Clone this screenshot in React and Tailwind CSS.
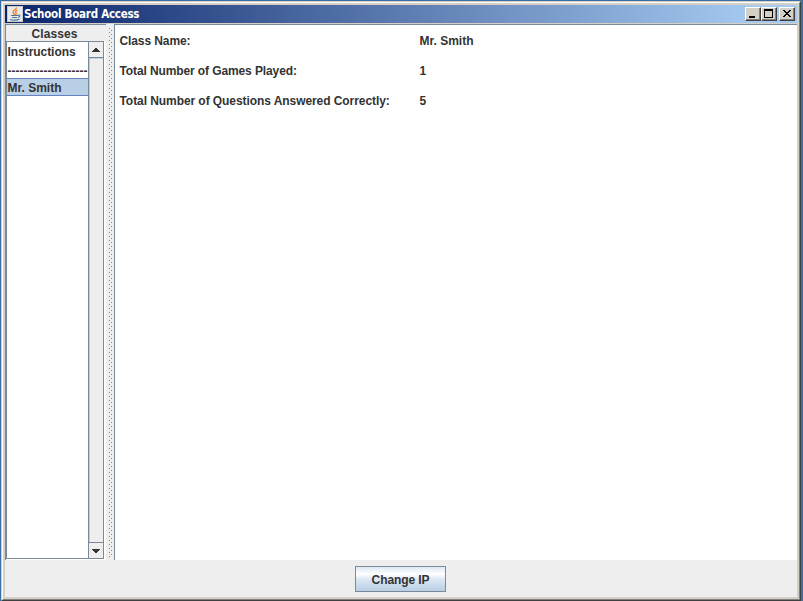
const line = "border-[#7a8a99]";

function JavaIcon() {
  return (
    <svg className="h-4 w-4 shrink-0" viewBox="0 0 16 16" fill="none">
      <rect width="16" height="16" fill="#c8ccd0" />
      <rect x="1" y="1" width="14" height="14" fill="#e9e9e7" />
      <path d="M9.500 1.500C9.500 3.500 6 4 6 6C6 7.300 7.500 7.600 7.500 9M10.500 4C8.500 5 8 6 9 7C9.500 7.700 9 8.200 8.700 9" stroke="#ee7d22" strokeWidth="1.300" />
      <path d="M4 9.500H11M5 11.500H10M11 9.200C13.800 8.800 13 11 11 11.500M3 13.500C5 14.500 10 14.500 12.500 13" stroke="#4b7598" strokeWidth="1.200" />
    </svg>
  );
}

function WindowButton({ children }) {
  return (
    <div className="h-[14px] w-4 border border-t-white border-l-white border-r-[#404040] border-b-[#404040] bg-[#d4d0c8] shadow-[inset_-1px_-1px_0_#808080]">
      <svg className="h-3 w-[14px]" viewBox="0 0 14 12" shapeRendering="crispEdges">{children}</svg>
    </div>
  );
}

function Arrow({ down }) {
  return (
    <svg className="h-1 w-2" viewBox="0 0 8 4" shapeRendering="crispEdges">
      <path fill="#333" d={down ? "M0 0h8v1H0zM1 1h6v1H1zM2 2h4v1H2zM3 3h2v1H3z" : "M3 0h2v1H3zM2 1h4v1H2zM1 2h6v1H1zM0 3h8v1H0z"} />
    </svg>
  );
}

const rows = [
  ["Class Name:", "Mr. Smith", "tracking-[-0.1px]"],
  ["Total Number of Games Played:", "1", "tracking-[-0.11px]"],
  ["Total Number of Questions Answered Correctly:", "5", "tracking-[-0.07px]"],
];

export default function App() {
  return (
    <div className="h-[601px] w-[803px] overflow-hidden bg-[#3a6ea5] pt-px pr-[2px] pl-px font-['Liberation_Sans',Arial,sans-serif] text-[12px] leading-[18px] font-bold text-[#333]">
      <div className="h-[600px] border border-t-[#d4d0c8] border-l-[#d4d0c8] border-r-[#404040] border-b-[#404040]">
        <div className="h-full border border-t-white border-l-white border-r-[#808080] border-b-[#808080]">
          <div className="flex h-full flex-col border-2 border-[#d4d0c8]">
            <header className="flex h-[18px] shrink-0 items-center bg-linear-to-r/srgb from-[#0a246a] to-[#a6caf0] to-95% pr-[2px] pl-[2px]">
              <JavaIcon />
              <span className="ml-px flex-1 font-['DejaVu_Sans_Condensed','DejaVu_Sans',sans-serif] text-[11.5px] tracking-[-0.25px] whitespace-nowrap text-white">School Board Access</span>
              <div className="flex">
                <WindowButton><path d="M3 8h6v2H3z" /></WindowButton>
                <WindowButton><path fillRule="evenodd" d="M2 1h9v9H2zM3 3v6h7V3z" /></WindowButton>
                <div className="ml-[2px]"><WindowButton><path d="M3 2h2v1h1v1h2V3h1V2h2v1h-1v1H9v1H8v1h1v1h1v1h1v1H9V8H8V7H6v1H5v1H3V8h1V7h1V6h1V5H5V4H4V3H3z" /></WindowButton></div>
              </div>
            </header>
            <div className="h-px shrink-0 bg-[#d4d0c8]" />
            <main className="flex h-[536px] shrink-0 bg-white">
              <aside className={`flex w-[101px] shrink-0 flex-col border-t border-l ${line}`}>
                <div className="h-4 bg-[#eee] pr-[3px] text-center leading-[18px] tracking-[0.1px]">Classes</div>
                <div className={`mr-[2px] flex h-[518px] border ${line}`}>
                  <div className="min-w-0 flex-1 whitespace-nowrap">
                    <div className="h-[18px] pl-[0.5px] leading-[20px] tracking-[-0.05px]">Instructions</div>
                    <div className="h-[18px] pl-[0.5px] leading-[22px]">--------------------</div>
                    <div className="h-[18px] border-y border-[#6382bf] bg-[#b8cfe5] pl-[0.5px] leading-[18px]">Mr. Smith</div>
                  </div>
                  <div className={`flex w-[15px] flex-col border-l ${line} bg-[#eee]`}>
                    <div className={`flex h-4 items-center justify-center border-b ${line}`}><Arrow /></div>
                    <div className="flex-1 border-t border-l border-[#b8cfe5]" />
                    <div className={`flex h-4 items-center justify-center border-t ${line}`}><Arrow down /></div>
                  </div>
                </div>
              </aside>
              <div className="w-2 shrink-0 bg-[#eee] pt-1 pb-[3px] pl-[3px]">
                <svg className="h-full w-[3px]" shapeRendering="crispEdges">
                  <defs>
                    <pattern id="grip" width="4" height="4" patternUnits="userSpaceOnUse">
                      <path fill="#7a8a99" d="M0 0h1v1H0zM2 2h1v1H2z" />
                    </pattern>
                  </defs>
                  <rect width="100%" height="100%" fill="url(#grip)" />
                </svg>
              </div>
              <section className={`flex-1 border-t border-l ${line} pt-[7px] pl-1`}>
                {rows.map(([label, value, tracking]) => (
                  <div key={label} className="flex h-[30px] whitespace-nowrap">
                    <span className={`w-[300px] pl-[0.5px] ${tracking}`}>{label}</span><span className="pl-[0.5px]">{value}</span>
                  </div>
                ))}
              </section>
            </main>
            <footer className="flex min-h-0 flex-1 justify-center bg-[#eee] pt-[6px] pr-[2px]">
              <button className={`h-[26px] w-[91px] border ${line} bg-[linear-gradient(#dde8f3,#fff_30%,#dde8f3_50%,#b8cfe5)] pt-px pl-px tracking-[-0.1px]`}>Change IP</button>
            </footer>
          </div>
        </div>
      </div>
    </div>
  );
}
